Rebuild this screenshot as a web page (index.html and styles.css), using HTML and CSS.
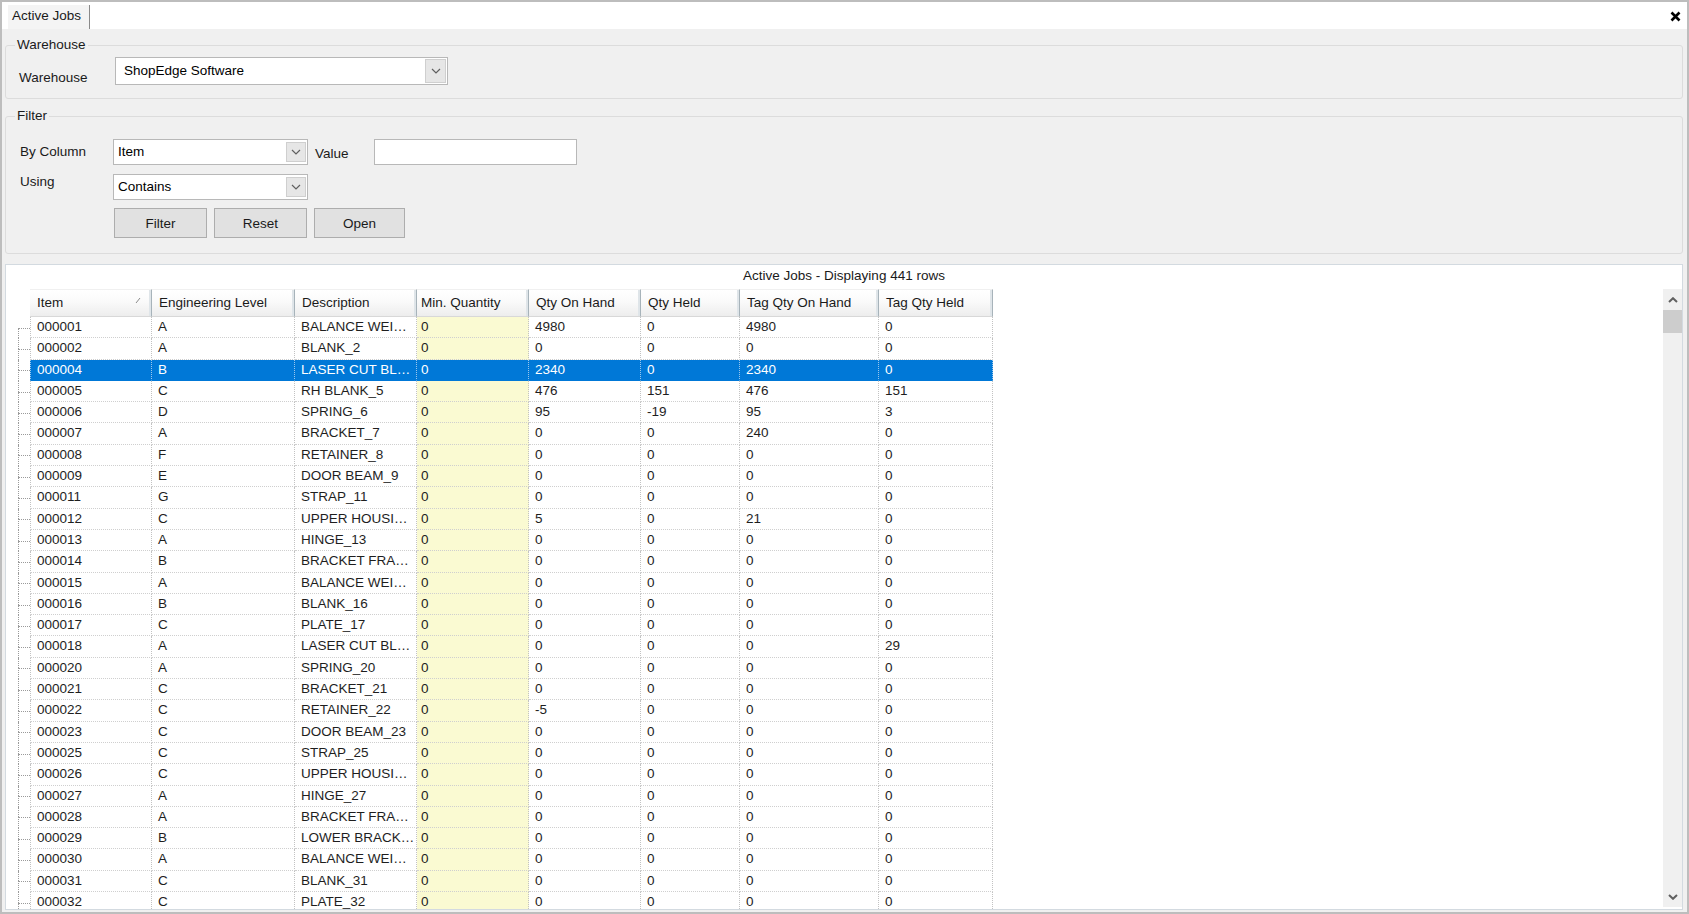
FILE: index.html
```html
<!DOCTYPE html>
<html>
<head>
<meta charset="utf-8">
<link rel="stylesheet" href="styles.css">
</head>
<body>
<div class="window">
  <div class="tabstrip">
    <div class="tab">Active Jobs</div>
    <div class="close"><svg width="11" height="11" viewBox="0 0 11 11"><path d="M1.5 1.5L9.5 9.5M9.5 1.5L1.5 9.5" stroke="#000" stroke-width="2.6" fill="none"/></svg></div>
  </div>
  <div class="content">
    <fieldset class="group wh">
      <legend>Warehouse</legend>
      <div class="frow">
        <label class="lbl lbl-wh">Warehouse</label>
        <div class="combo combo-wh"><span class="ctext">ShopEdge Software</span><span class="dd big"><svg width="10" height="6" viewBox="0 0 10 6"><path d="M1 1L5 5L9 1" stroke="#606060" stroke-width="1.2" fill="none"/></svg></span></div>
      </div>
    </fieldset>
    <fieldset class="group flt">
      <legend>Filter</legend>
      <div class="frow r1">
        <label class="lbl lbl-f">By Column</label>
        <div class="combo combo-f"><span class="ctext">Item</span><span class="dd"><svg width="10" height="6" viewBox="0 0 10 6"><path d="M1 1L5 5L9 1" stroke="#606060" stroke-width="1.2" fill="none"/></svg></span></div>
        <label class="lbl lbl-val">Value</label>
        <div class="textbox"></div>
      </div>
      <div class="frow r2">
        <label class="lbl lbl-f lbl-using">Using</label>
        <div class="combo combo-f"><span class="ctext">Contains</span><span class="dd"><svg width="10" height="6" viewBox="0 0 10 6"><path d="M1 1L5 5L9 1" stroke="#606060" stroke-width="1.2" fill="none"/></svg></span></div>
      </div>
      <div class="frow r3">
        <button class="btn w93">Filter</button>
        <button class="btn w93">Reset</button>
        <button class="btn w91">Open</button>
      </div>
    </fieldset>
    <div class="panel">
      <div class="title">Active Jobs - Displaying 441 rows</div>
      <div class="body">
        <div class="grid">
          <div class="hrow">
            <div class="hgutter"></div>
            <div class="h">Item<svg class="sort" width="6" height="7" viewBox="0 0 6 7"><path d="M1 6L5 1" stroke="#8a8a8a" stroke-width="1" fill="none"/></svg></div>
            <div class="h">Engineering Level</div>
            <div class="h">Description</div>
            <div class="h hmin">Min. Quantity</div>
            <div class="h">Qty On Hand</div>
            <div class="h">Qty Held</div>
            <div class="h">Tag Qty On Hand</div>
            <div class="h">Tag Qty Held</div>
          </div>
          <div class="row"><div class="tree first"><i></i><i></i></div><div class="c">000001</div><div class="c">A</div><div class="c">BALANCE WEI…</div><div class="c min">0</div><div class="c">4980</div><div class="c">0</div><div class="c">4980</div><div class="c">0</div></div>
          <div class="row"><div class="tree"><i></i><i></i></div><div class="c">000002</div><div class="c">A</div><div class="c">BLANK_2</div><div class="c min">0</div><div class="c">0</div><div class="c">0</div><div class="c">0</div><div class="c">0</div></div>
          <div class="row sel"><div class="tree"><i></i><i></i></div><div class="c">000004</div><div class="c">B</div><div class="c">LASER CUT BL…</div><div class="c min">0</div><div class="c">2340</div><div class="c">0</div><div class="c">2340</div><div class="c">0</div></div>
          <div class="row"><div class="tree"><i></i><i></i></div><div class="c">000005</div><div class="c">C</div><div class="c">RH BLANK_5</div><div class="c min">0</div><div class="c">476</div><div class="c">151</div><div class="c">476</div><div class="c">151</div></div>
          <div class="row"><div class="tree"><i></i><i></i></div><div class="c">000006</div><div class="c">D</div><div class="c">SPRING_6</div><div class="c min">0</div><div class="c">95</div><div class="c">-19</div><div class="c">95</div><div class="c">3</div></div>
          <div class="row"><div class="tree"><i></i><i></i></div><div class="c">000007</div><div class="c">A</div><div class="c">BRACKET_7</div><div class="c min">0</div><div class="c">0</div><div class="c">0</div><div class="c">240</div><div class="c">0</div></div>
          <div class="row"><div class="tree"><i></i><i></i></div><div class="c">000008</div><div class="c">F</div><div class="c">RETAINER_8</div><div class="c min">0</div><div class="c">0</div><div class="c">0</div><div class="c">0</div><div class="c">0</div></div>
          <div class="row"><div class="tree"><i></i><i></i></div><div class="c">000009</div><div class="c">E</div><div class="c">DOOR BEAM_9</div><div class="c min">0</div><div class="c">0</div><div class="c">0</div><div class="c">0</div><div class="c">0</div></div>
          <div class="row"><div class="tree"><i></i><i></i></div><div class="c">000011</div><div class="c">G</div><div class="c">STRAP_11</div><div class="c min">0</div><div class="c">0</div><div class="c">0</div><div class="c">0</div><div class="c">0</div></div>
          <div class="row"><div class="tree"><i></i><i></i></div><div class="c">000012</div><div class="c">C</div><div class="c">UPPER HOUSI…</div><div class="c min">0</div><div class="c">5</div><div class="c">0</div><div class="c">21</div><div class="c">0</div></div>
          <div class="row"><div class="tree"><i></i><i></i></div><div class="c">000013</div><div class="c">A</div><div class="c">HINGE_13</div><div class="c min">0</div><div class="c">0</div><div class="c">0</div><div class="c">0</div><div class="c">0</div></div>
          <div class="row"><div class="tree"><i></i><i></i></div><div class="c">000014</div><div class="c">B</div><div class="c">BRACKET FRA…</div><div class="c min">0</div><div class="c">0</div><div class="c">0</div><div class="c">0</div><div class="c">0</div></div>
          <div class="row"><div class="tree"><i></i><i></i></div><div class="c">000015</div><div class="c">A</div><div class="c">BALANCE WEI…</div><div class="c min">0</div><div class="c">0</div><div class="c">0</div><div class="c">0</div><div class="c">0</div></div>
          <div class="row"><div class="tree"><i></i><i></i></div><div class="c">000016</div><div class="c">B</div><div class="c">BLANK_16</div><div class="c min">0</div><div class="c">0</div><div class="c">0</div><div class="c">0</div><div class="c">0</div></div>
          <div class="row"><div class="tree"><i></i><i></i></div><div class="c">000017</div><div class="c">C</div><div class="c">PLATE_17</div><div class="c min">0</div><div class="c">0</div><div class="c">0</div><div class="c">0</div><div class="c">0</div></div>
          <div class="row"><div class="tree"><i></i><i></i></div><div class="c">000018</div><div class="c">A</div><div class="c">LASER CUT BL…</div><div class="c min">0</div><div class="c">0</div><div class="c">0</div><div class="c">0</div><div class="c">29</div></div>
          <div class="row"><div class="tree"><i></i><i></i></div><div class="c">000020</div><div class="c">A</div><div class="c">SPRING_20</div><div class="c min">0</div><div class="c">0</div><div class="c">0</div><div class="c">0</div><div class="c">0</div></div>
          <div class="row"><div class="tree"><i></i><i></i></div><div class="c">000021</div><div class="c">C</div><div class="c">BRACKET_21</div><div class="c min">0</div><div class="c">0</div><div class="c">0</div><div class="c">0</div><div class="c">0</div></div>
          <div class="row"><div class="tree"><i></i><i></i></div><div class="c">000022</div><div class="c">C</div><div class="c">RETAINER_22</div><div class="c min">0</div><div class="c">-5</div><div class="c">0</div><div class="c">0</div><div class="c">0</div></div>
          <div class="row"><div class="tree"><i></i><i></i></div><div class="c">000023</div><div class="c">C</div><div class="c">DOOR BEAM_23</div><div class="c min">0</div><div class="c">0</div><div class="c">0</div><div class="c">0</div><div class="c">0</div></div>
          <div class="row"><div class="tree"><i></i><i></i></div><div class="c">000025</div><div class="c">C</div><div class="c">STRAP_25</div><div class="c min">0</div><div class="c">0</div><div class="c">0</div><div class="c">0</div><div class="c">0</div></div>
          <div class="row"><div class="tree"><i></i><i></i></div><div class="c">000026</div><div class="c">C</div><div class="c">UPPER HOUSI…</div><div class="c min">0</div><div class="c">0</div><div class="c">0</div><div class="c">0</div><div class="c">0</div></div>
          <div class="row"><div class="tree"><i></i><i></i></div><div class="c">000027</div><div class="c">A</div><div class="c">HINGE_27</div><div class="c min">0</div><div class="c">0</div><div class="c">0</div><div class="c">0</div><div class="c">0</div></div>
          <div class="row"><div class="tree"><i></i><i></i></div><div class="c">000028</div><div class="c">A</div><div class="c">BRACKET FRA…</div><div class="c min">0</div><div class="c">0</div><div class="c">0</div><div class="c">0</div><div class="c">0</div></div>
          <div class="row"><div class="tree"><i></i><i></i></div><div class="c">000029</div><div class="c">B</div><div class="c">LOWER BRACK…</div><div class="c min">0</div><div class="c">0</div><div class="c">0</div><div class="c">0</div><div class="c">0</div></div>
          <div class="row"><div class="tree"><i></i><i></i></div><div class="c">000030</div><div class="c">A</div><div class="c">BALANCE WEI…</div><div class="c min">0</div><div class="c">0</div><div class="c">0</div><div class="c">0</div><div class="c">0</div></div>
          <div class="row"><div class="tree"><i></i><i></i></div><div class="c">000031</div><div class="c">C</div><div class="c">BLANK_31</div><div class="c min">0</div><div class="c">0</div><div class="c">0</div><div class="c">0</div><div class="c">0</div></div>
          <div class="row"><div class="tree"><i></i><i></i></div><div class="c">000032</div><div class="c">C</div><div class="c">PLATE_32</div><div class="c min">0</div><div class="c">0</div><div class="c">0</div><div class="c">0</div><div class="c">0</div></div>
        </div>
        <div class="vscroll">
          <div class="sbtn"><svg width="10" height="6" viewBox="0 0 10 6"><path d="M1 5L5 1.2L9 5" stroke="#606060" stroke-width="2" fill="none"/></svg></div>
          <div class="thumb"></div>
          <div class="track"></div>
          <div class="sbtn"><svg width="10" height="6" viewBox="0 0 10 6"><path d="M1 1L5 4.8L9 1" stroke="#606060" stroke-width="2" fill="none"/></svg></div>
        </div>
      </div>
    </div>
  </div>
</div>
</body>
</html>
```

FILE: styles.css
```css
* { box-sizing: border-box; }
html, body {
  margin: 0;
  padding: 0;
  width: 1689px;
  height: 914px;
  overflow: hidden;
  background: #f0f0f0;
  font-family: "Liberation Sans", Arial, sans-serif;
  font-size: 13.5px;
  color: #1a1a1a;
}
.window {
  width: 1689px;
  height: 914px;
  border: 2px solid #bdbdbd;
  background: #f0f0f0;
  display: flex;
  flex-direction: column;
}
.tabstrip {
  height: 27px;
  flex: none;
  background: #ffffff;
  display: flex;
  align-items: flex-end;
  justify-content: space-between;
  padding-left: 6px;
}
.tab {
  height: 24px;
  width: 82px;
  background: #f4f4f4;
  border-right: 1px solid #8a8a8a;
  padding-left: 4px;
  line-height: 22px;
  color: #1a1a1a;
}
.close {
  align-self: center;
  width: 11px;
  height: 11px;
  margin-right: 6px;
  margin-top: 2px;
  display: flex;
}
.content {
  flex: 1;
  min-height: 0;
  display: flex;
  flex-direction: column;
  padding: 0 4px 0 3px;
}
.group {
  margin: 0;
  border: 1px solid #dcdcdc;
  border-radius: 3px;
  padding: 0;
  min-width: 0;
}
.group legend {
  margin-left: 9px;
  padding: 0 2px;
  line-height: 16px;
  height: 16px;
}
.wh { margin-top: 8px; padding: 4px 0 12px 0; }
.wh .frow { padding-left: 13px; }
.flt { margin-top: 9px; padding: 15px 0 15px 0; }
.flt .frow { padding-left: 14px; }
.frow { display: flex; align-items: flex-start; }
.lbl { line-height: 16px; white-space: nowrap; }
.lbl-wh { width: 96px; margin-top: 13px; }
.lbl-f { width: 93px; margin-top: 5px; }
.lbl-using { margin-top: 0; }
.lbl-val { width: 59px; margin-left: 7px; margin-top: 7px; }
.r2 { margin-top: 9px; }
.flt .r3 { margin-top: 8px; padding-left: 108px; gap: 7px; }
.combo {
  background: #ffffff;
  border: 1px solid #b8b8b8;
  display: flex;
  align-items: center;
  justify-content: space-between;
  color: #000;
}
.combo-wh { width: 333px; height: 28px; padding: 0 1px 0 8px; }
.combo-f { width: 195px; height: 26px; padding: 0 1px 0 4px; }
.ctext { line-height: 16px; white-space: nowrap; }
.dd {
  width: 20px;
  height: 20px;
  background: #e6e6e6;
  border: 1px solid #cfcfcf;
  display: flex;
  align-items: center;
  justify-content: center;
}
.dd.big { width: 21px; height: 24px; }
.textbox {
  width: 203px;
  height: 26px;
  background: #ffffff;
  border: 1px solid #b8b8b8;
}
.btn {
  height: 30px;
  background: #e1e1e1;
  border: 1px solid #adadad;
  font-family: "Liberation Sans", Arial, sans-serif;
  font-size: 13.5px;
  color: #1a1a1a;
  padding: 0;
}
.w93 { width: 93px; }
.w91 { width: 91px; }
.panel {
  margin-top: 10px;
  margin-bottom: 2px;
  flex: 1;
  min-height: 0;
  background: #ffffff;
  border: 1px solid #d3dae0;
  display: flex;
  flex-direction: column;
}
.title {
  height: 24px;
  flex: none;
  text-align: center;
  line-height: 22px;
  color: #1a1a1a;
}
.body {
  flex: 1;
  min-height: 0;
  display: flex;
}
.grid {
  flex: 1;
  min-width: 0;
  overflow: hidden;
}
.hrow, .row {
  display: grid;
  grid-template-columns: 24px 122px 143px 122px 112px 112px 99px 139px 114px;
}
.hrow { height: 28px; }
.h {
  background: linear-gradient(#ffffff 0%, #fafafa 45%, #ededed 100%);
  border-right: 1px solid #a7b3ba;
  box-shadow: inset -2px 0 0 #dfe5e9;
  border-bottom: 1px solid #d8d8d8;
  border-top: 1px solid #f0f0f0;
  padding-left: 7px;
  line-height: 26px;
  white-space: nowrap;
  overflow: hidden;
  display: flex;
  align-items: center;
  justify-content: space-between;
  padding-right: 10px;
}
.h.hmin { padding-left: 4px; }
.sort { margin-bottom: 6px; }
.row { height: 21.3px; }
.c {
  border-right: 1px dotted #c2c2c2;
  border-bottom: 1px dotted #cfcfcf;
  padding-left: 6px;
  line-height: 20px;
  white-space: nowrap;
  overflow: hidden;
  color: #1e1e1e;
}
.row .c:nth-child(2) { border-left: 1px dotted #c2c2c2; padding-left: 6px; }
.c.min { background: #fafad2; padding-left: 4px; }
.row.sel .c {
  background: #0078d7;
  color: #ffffff;
  border-right-color: #9cc7ec;
  border-bottom-color: #0078d7;
}
.row.sel .c:nth-child(2) { border-left-color: #9cc7ec; }
.tree {
  display: grid;
  grid-template-rows: 1fr 1fr;
}
.tree i {
  margin-left: 12px;
  border-left: 1px dotted #9a9a9a;
}
.tree i:last-child { border-top: 1px dotted #9a9a9a; }
.tree.first i:first-child { border-left: none; }
.vscroll {
  width: 19px;
  flex: none;
  margin-bottom: 2px;
  background: #f0f0f0;
  display: flex;
  flex-direction: column;
}
.sbtn {
  height: 21px;
  flex: none;
  display: flex;
  align-items: center;
  justify-content: center;
}
.thumb {
  height: 23px;
  flex: none;
  background: #cdcdcd;
}
.track { flex: 1; }
```
